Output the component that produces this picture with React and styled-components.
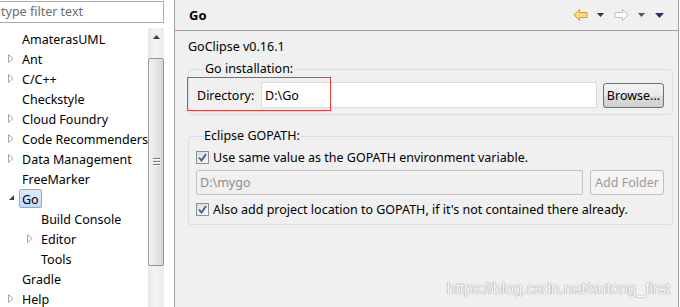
import React from 'react'
import styled, { createGlobalStyle } from 'styled-components'

const GlobalStyle = createGlobalStyle`
  html, body {
    margin: 0;
    padding: 0;
    background: #ffffff;
  }
  #root {
    width: 680px;
    height: 307px;
    overflow: hidden;
  }
`

const font = `'Noto Sans', 'DejaVu Sans', sans-serif`

const Window = styled.div`
  display: flex;
  width: 680px;
  height: 307px;
  font-family: ${font};
  font-size: 12px;
  color: #000;
  background: #fff;
  position: relative;
`

const LeftPane = styled.div`
  width: 174px;
  flex: none;
  display: flex;
  flex-direction: column;
  background: #fff;
`

const Filter = styled.div`
  width: 164px;
  height: 22px;
  margin-top: 1px;
  box-sizing: border-box;
  border: 1px solid #abadb3;
  border-left: none;
  color: #6d6d6d;
  font-size: 12.5px;
  line-height: 20px;
  padding-left: 1px;
`

const TreeArea = styled.div`
  display: flex;
  margin-top: 5px;
  flex: 1;
  min-height: 0;
`

const Tree = styled.div`
  width: 148px;
  flex: none;
  overflow: hidden;
`

const Row = styled.div`
  height: 20px;
  display: flex;
  align-items: center;
  padding-left: ${p => (p.$child ? 41 : 22)}px;
  position: relative;
  white-space: nowrap;
  font-size: 12.5px;
`

const Twisty = styled.span`
  position: absolute;
  left: ${p => p.$left}px;
  top: 6px;
  display: flex;
`

const ItemLabel = styled.span`
  padding: 0 2px;
  margin-left: -3px;
  height: 19px;
  line-height: 19px;
  box-sizing: border-box;
  border: 1px solid ${p => (p.$selected ? '#84acdd' : 'transparent')};
  border-radius: 2px;
  background: ${p => (p.$selected ? 'linear-gradient(#dcebfc, #c1dbfc)' : 'none')};
`

const ScrollBar = styled.div`
  width: 16px;
  flex: none;
  display: flex;
  flex-direction: column;
  background: linear-gradient(to right, #e8e8e8, #f3f3f3 40%, #ebebeb);
`

const ScrollArrow = styled.div`
  height: 30px;
  display: flex;
  justify-content: center;
  padding-top: 7px;
  box-sizing: border-box;
`

const Thumb = styled.div`
  height: 208px;
  box-sizing: border-box;
  border: 1px solid #979797;
  border-radius: 2px;
  background: linear-gradient(to right, #f2f2f2, #e6e6e6 50%, #d5d5d5);
  display: flex;
  align-items: center;
  justify-content: center;
`

const Grip = styled.div`
  width: 7px;
  display: flex;
  flex-direction: column;
  gap: 1px;
  & span {
    height: 1px;
    background: #777;
    border-bottom: 1px solid #fff;
  }
`

const RightPane = styled.div`
  flex: 1;
  display: flex;
  flex-direction: column;
  background: #f0f0f0;
  border-left: 1px solid #a0a0a0;
  border-right: 1px solid #a0a0a0;
  margin-right: 1px;
`

const Header = styled.div`
  height: 31px;
  box-sizing: border-box;
  border-bottom: 1px solid #a0a0a0;
  display: flex;
  align-items: center;
  padding-left: 14px;
  padding-right: 14px;
`

const Title = styled.div`
  font-weight: bold;
  font-size: 13px;
  flex: 1;
`

const Tools = styled.div`
  display: flex;
  align-items: center;
`

const Content = styled.div`
  padding: 8px 5px 0 13px;
  display: flex;
  flex-direction: column;
`

const Version = styled.div`
  height: 16px;
  line-height: 16px;
  font-size: 12.5px;
`

const Group = styled.fieldset`
  margin: ${p => p.$top}px 0 0 0;
  padding: ${p => p.$pad};
  border: 1px solid #d5dfe5;
  border-radius: 3px;
  min-width: 0;
  position: relative;
  & > legend {
    padding: 0 1px;
    margin-left: 7px;
    font-size: 12.5px;
    line-height: 16px;
  }
`

const FieldRow = styled.div`
  display: flex;
  align-items: center;
  gap: ${p => p.$gap || 6}px;
  margin-top: ${p => p.$mt || 0}px;
`

const Label = styled.span`
  width: 58px;
  font-size: 12.5px;
`

const TextBox = styled.div`
  flex: 1;
  height: ${p => p.$h || 26}px;
  box-sizing: border-box;
  border: 1px solid ${p => (p.$disabled ? '#c3c3c3' : '#dcdcdc')};
  border-radius: ${p => (p.$disabled ? 2 : 0)}px;
  background: ${p => (p.$disabled ? '#f0f0f0' : '#fff')};
  color: ${p => (p.$disabled ? '#8d8d8d' : '#000')};
  font-size: 12.5px;
  display: flex;
  align-items: center;
  padding-left: 3px;
`

const Button = styled.div`
  width: ${p => p.$w}px;
  height: 25px;
  box-sizing: border-box;
  border: 1px solid ${p => (p.$disabled ? '#bfbfbf' : '#707070')};
  border-radius: 3px;
  background: ${p =>
    p.$disabled ? '#f4f4f4' : 'linear-gradient(#f2f2f2 0%, #ebebeb 50%, #dddddd 51%, #cfcfcf 100%)'};
  color: ${p => (p.$disabled ? '#9a9a9a' : '#000')};
  font-size: 12.5px;
  display: flex;
  align-items: center;
  justify-content: center;
  flex: none;
`

const CheckRow = styled.div`
  display: flex;
  align-items: center;
  gap: 4px;
  height: 18px;
  margin-top: ${p => p.$mt || 0}px;
  font-size: 12.5px;
  white-space: nowrap;
`

const Box = styled.span`
  width: 13px;
  height: 13px;
  box-sizing: border-box;
  border: 1px solid #8e8f8f;
  background: linear-gradient(135deg, #dcdcdc, #fbfbfb);
  display: flex;
  align-items: center;
  justify-content: center;
  flex: none;
`

const Highlight = styled.div`
  position: absolute;
  left: -2px;
  top: 0;
  width: 144px;
  height: 34px;
  box-sizing: border-box;
  border: 1.5px solid #f03c3c;
  pointer-events: none;
`

const Watermark = styled.div`
  position: absolute;
  right: 10px;
  bottom: 9px;
  font-family: 'Liberation Sans', Arial, sans-serif;
  font-size: 16px;
  color: #fbfbfb;
  text-shadow: 0 0 1px #8c8c8c, 0 0 1px #a0a0a0;
  letter-spacing: -0.2px;
`

const Arrow = ({ dir, fill, stroke }) => (
  <svg width="15" height="12" viewBox="0 0 15 12">
    <path
      d={
        dir === 'left'
          ? 'M1 6 L6.5 0.5 L6.5 3.5 L14 3.5 L14 8.5 L6.5 8.5 L6.5 11.5 Z'
          : 'M14 6 L8.5 0.5 L8.5 3.5 L1 3.5 L1 8.5 L8.5 8.5 L8.5 11.5 Z'
      }
      fill={fill}
      stroke={stroke}
      strokeWidth="1"
      strokeLinejoin="round"
    />
  </svg>
)

const Drop = ({ color = '#333', w = 7, h = 4, ml = 9, mr = 10 }) => (
  <svg width={w} height={h} viewBox={`0 0 ${w} ${h}`} style={{ marginLeft: ml, marginRight: mr }}>
    <path d={`M0 0 L${w} 0 L${w / 2} ${h} Z`} fill={color} />
  </svg>
)

const Tri = ({ open }) =>
  open ? (
    <svg width="7" height="7" viewBox="0 0 7 7">
      <path d="M6 1 L6 6 L1 6 Z" fill="#404040" />
    </svg>
  ) : (
    <svg width="6" height="9" viewBox="0 0 6 9">
      <path d="M0.5 0.5 L5 4.5 L0.5 8.5 Z" fill="#fff" stroke="#a6a6a6" />
    </svg>
  )

const CheckMark = () => (
  <svg width="9" height="9" viewBox="0 0 9 9">
    <path d="M1 4.5 L3.5 7.5 L8 1" fill="none" stroke="#3d5a98" strokeWidth="1.8" />
  </svg>
)

const items = [
  { label: 'AmaterasUML' },
  { label: 'Ant', twisty: true },
  { label: 'C/C++', twisty: true },
  { label: 'Checkstyle' },
  { label: 'Cloud Foundry', twisty: true },
  { label: 'Code Recommenders', twisty: true },
  { label: 'Data Management', twisty: true },
  { label: 'FreeMarker' },
  { label: 'Go', open: true, selected: true },
  { label: 'Build Console', child: true },
  { label: 'Editor', child: true, twisty: true },
  { label: 'Tools', child: true },
  { label: 'Gradle' },
  { label: 'Help', twisty: true },
]

const App = () => (
  <Window>
    <GlobalStyle />
    <LeftPane>
      <Filter>type filter text</Filter>
      <TreeArea>
        <Tree>
          {items.map(it => (
            <Row key={it.label} $child={it.child}>
              {(it.twisty || it.open) && (
                <Twisty $left={it.child ? 27 : 8}>
                  <Tri open={it.open} />
                </Twisty>
              )}
              <ItemLabel $selected={it.selected}>{it.label}</ItemLabel>
            </Row>
          ))}
        </Tree>
        <ScrollBar>
          <ScrollArrow>
            <svg width="7" height="4" viewBox="0 0 7 4">
              <path d="M0 4 L7 4 L3.5 0 Z" fill="#3c3c3c" />
            </svg>
          </ScrollArrow>
          <Thumb>
            <Grip>
              <span />
              <span />
              <span />
            </Grip>
          </Thumb>
        </ScrollBar>
      </TreeArea>
    </LeftPane>
    <RightPane>
      <Header>
        <Title>Go</Title>
        <Tools>
          <Arrow dir="left" fill="#fcd98a" stroke="#d49a22" />
          <Drop />
          <Arrow dir="right" fill="#fff" stroke="#bdbdbd" />
          <Drop color="#555" />
          <Drop w={9} h={5} ml={0} mr={0} color="#3a2a6a" />
        </Tools>
      </Header>
      <Content>
        <Version>GoClipse v0.16.1</Version>
        <Group $top={6} $pad="5px 8px 6px 8px">
          <legend>Go installation:</legend>
          <FieldRow>
            <Label>Directory:</Label>
            <TextBox>D:\Go</TextBox>
            <Button $w={61}>Browse...</Button>
          </FieldRow>
          <Highlight />
        </Group>
        <Group $top={13} $pad="4px 8px 6px 7px">
          <legend>Eclipse GOPATH:</legend>
          <CheckRow>
            <Box>
              <CheckMark />
            </Box>
            Use same value as the GOPATH environment variable.
          </CheckRow>
          <FieldRow $gap={7} $mt={4}>
            <TextBox $disabled $h={25}>
              D:\mygo
            </TextBox>
            <Button $w={74} $disabled>
              Add Folder
            </Button>
          </FieldRow>
          <CheckRow $mt={5}>
            <Box>
              <CheckMark />
            </Box>
            Also add project location to GOPATH, if it's not contained there already.
          </CheckRow>
        </Group>
      </Content>
    </RightPane>
    <Watermark>https://blog.csdn.net/sutong_first</Watermark>
  </Window>
)

export default App
